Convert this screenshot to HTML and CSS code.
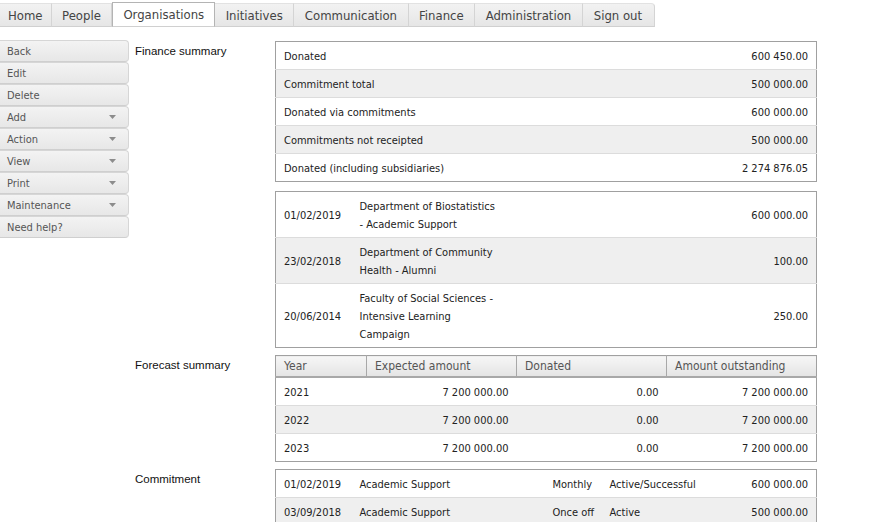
FILE: index.html
```html
<!DOCTYPE html>
<html lang="en">
<head>
<meta charset="utf-8">
<title>Organisation</title>
<link rel="stylesheet" href="styles.css">
</head>
<body>
<nav class="tabs">
  <a class="tab first">Home</a>
  <a class="tab">People</a>
  <a class="tab active">Organisations</a>
  <a class="tab">Initiatives</a>
  <a class="tab">Communication</a>
  <a class="tab">Finance</a>
  <a class="tab">Administration</a>
  <a class="tab last">Sign out</a>
</nav>
<div class="page">
  <aside class="side">
    <a class="btn">Back</a>
    <a class="btn">Edit</a>
    <a class="btn">Delete</a>
    <a class="btn">Add<svg class="arrow" viewBox="0 0 7 4"><path d="M0 0h7L3.5 4z"/></svg></a>
    <a class="btn">Action<svg class="arrow" viewBox="0 0 7 4"><path d="M0 0h7L3.5 4z"/></svg></a>
    <a class="btn">View<svg class="arrow" viewBox="0 0 7 4"><path d="M0 0h7L3.5 4z"/></svg></a>
    <a class="btn">Print<svg class="arrow" viewBox="0 0 7 4"><path d="M0 0h7L3.5 4z"/></svg></a>
    <a class="btn">Maintenance<svg class="arrow" viewBox="0 0 7 4"><path d="M0 0h7L3.5 4z"/></svg></a>
    <a class="btn">Need help?</a>
  </aside>
  <main class="content">
    <section class="block">
      <h2 class="label">Finance summary</h2>
      <div class="tables">
        <table class="grid sum">
          <tr><td>Donated</td><td class="num">600 450.00</td></tr>
          <tr><td>Commitment total</td><td class="num">500 000.00</td></tr>
          <tr><td>Donated via commitments</td><td class="num">600 000.00</td></tr>
          <tr><td>Commitments not receipted</td><td class="num">500 000.00</td></tr>
          <tr><td>Donated (including subsidiaries)</td><td class="num">2 274 876.05</td></tr>
        </table>
        <table class="grid gifts">
          <colgroup><col class="c-date"><col class="c-desc"><col></colgroup>
          <tr><td>01/02/2019</td><td>Department of Biostatistics - Academic Support</td><td class="num">600 000.00</td></tr>
          <tr><td>23/02/2018</td><td>Department of Community Health - Alumni</td><td class="num">100.00</td></tr>
          <tr><td>20/06/2014</td><td>Faculty of Social Sciences - Intensive Learning Campaign</td><td class="num">250.00</td></tr>
        </table>
      </div>
    </section>
    <section class="block">
      <h2 class="label">Forecast summary</h2>
      <div class="tables">
        <table class="grid forecast">
          <colgroup><col class="f-year"><col class="f-col"><col class="f-col"><col class="f-col"></colgroup>
          <thead>
            <tr><th>Year</th><th>Expected amount</th><th>Donated</th><th>Amount outstanding</th></tr>
          </thead>
          <tbody>
            <tr><td>2021</td><td class="num">7 200 000.00</td><td class="num">0.00</td><td class="num">7 200 000.00</td></tr>
            <tr><td>2022</td><td class="num">7 200 000.00</td><td class="num">0.00</td><td class="num">7 200 000.00</td></tr>
            <tr><td>2023</td><td class="num">7 200 000.00</td><td class="num">0.00</td><td class="num">7 200 000.00</td></tr>
          </tbody>
        </table>
      </div>
    </section>
    <section class="block">
      <h2 class="label">Commitment</h2>
      <div class="tables">
        <table class="grid commit">
          <colgroup><col class="m-date"><col class="m-desc"><col class="m-freq"><col class="m-status"><col></colgroup>
          <tr><td>01/02/2019</td><td>Academic Support</td><td>Monthly</td><td>Active/Successful</td><td class="num">600 000.00</td></tr>
          <tr><td>03/09/2018</td><td>Academic Support</td><td>Once off</td><td>Active</td><td class="num">500 000.00</td></tr>
        </table>
      </div>
    </section>
  </main>
</div>
</body>
</html>
```

FILE: styles.css
```css
html, body {
  margin: 0;
  padding: 0;
  background: #fff;
}

body {
  font-family: "DejaVu Sans Condensed", "DejaVu Sans", Verdana, sans-serif;
  font-stretch: condensed;
  color: #222;
  font-size: 11px;
}

/* ---------- top tabs ---------- */
.tabs {
  display: flex;
  margin-top: 3px;
  height: 24px;
}

.tab {
  box-sizing: border-box;
  height: 24px;
  padding: 0 10.5px;
  display: flex;
  align-items: center;
  font-size: 13px;
  color: #444;
  background: linear-gradient(#f2f2f2, #e6e6e6);
  border-right: 1px solid #d4d4d4;
  border-top: 1px solid #e2e2e2;
  border-bottom: 1px solid #d0d0d0;
}

.tab.first {
  padding-left: 8px;
  padding-right: 8px;
}

.tab.active {
  padding: 0 10px;
  background: #fff;
  border: 1px solid #b4b4b4;
  border-bottom-color: #d0d0d0;
  margin-top: -1px;
  height: 25px;
}

.tab.last {
  padding-right: 12px;
  padding-left: 11px;
  border-top-right-radius: 4px;
}

/* ---------- layout ---------- */
.page {
  display: flex;
  align-items: flex-start;
  padding-top: 13px;
}

.side {
  width: 129px;
  flex: none;
  display: flex;
  flex-direction: column;
}

.btn {
  box-sizing: border-box;
  height: 22px;
  display: flex;
  align-items: center;
  justify-content: space-between;
  padding: 0 12px 0 7px;
  font-size: 11px;
  color: #555;
  background: linear-gradient(#f3f3f3, #e7e7e7);
  border: 1px solid #d6d6d6;
  border-left: none;
  border-bottom-color: #cfcfcf;
  border-radius: 0 4px 4px 0;
}

.arrow {
  width: 7px;
  height: 4px;
  fill: #8c8c8c;
}

.content {
  margin-left: 6px;
  padding-top: 1px;
  display: flex;
  flex-direction: column;
  gap: 7px;
}

.block {
  display: grid;
  grid-template-columns: 140px 542px;
}

.label {
  margin: 0;
  padding-top: 3px;
  font-family: "Liberation Sans", Arial, sans-serif;
  font-stretch: normal;
  font-weight: 400;
  font-size: 11.5px;
  line-height: 14px;
  color: #111;
}

.tables {
  display: flex;
  flex-direction: column;
  gap: 9px;
}

/* ---------- tables ---------- */
.grid {
  width: 542px;
  border-collapse: collapse;
  border: 1px solid #a0a0a0;
  table-layout: fixed;
}

.grid td {
  padding: 6px 8px 3px;
  line-height: 18px;
  border-top: 1px solid #dcdcdc;
  vertical-align: middle;
  color: #222;
}

.grid tr:first-child td {
  border-top: none;
}

.grid > tr:nth-child(even) td,
.grid tbody tr:nth-child(even) td {
  background: #efefef;
}

.num {
  text-align: right;
}

.c-date { width: 76px; }
.c-desc { width: 156px; }

.forecast .f-year { width: 91px; }
.forecast .f-col { width: 150px; }

.forecast th {
  height: 20px;
  padding: 0 8px;
  text-align: left;
  font-weight: normal;
  font-size: 12px;
  color: #555;
  background: linear-gradient(#f6f6f6, #e4e4e4);
  border-left: 1px solid #a8a8a8;
  border-bottom: 2px solid #a8a8a8;
}

.forecast th:first-child {
  border-left: none;
}

.forecast tbody tr:first-child td {
  border-top: none;
}

.m-date { width: 76px; }
.m-desc { width: 193px; }
.m-freq { width: 57px; }
.m-status { width: 110px; }

.commit td {
  white-space: nowrap;
}

.commit td:nth-child(3) {
  padding-right: 0;
}
```
